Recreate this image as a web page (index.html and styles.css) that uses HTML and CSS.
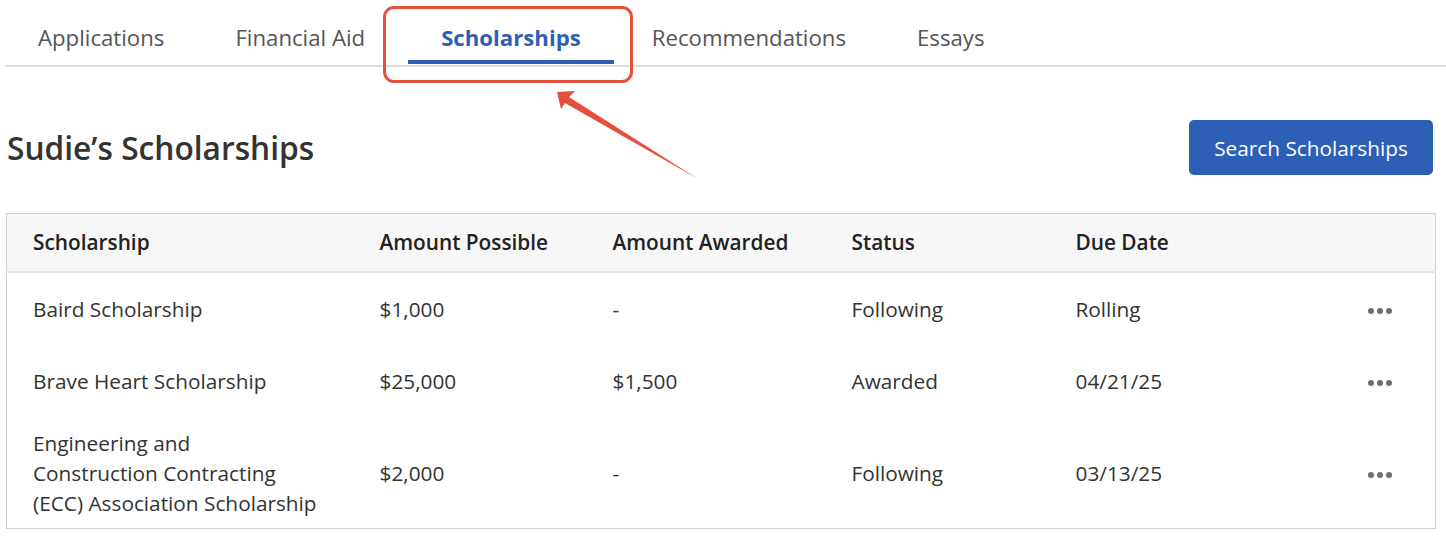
FILE: index.html
```html
<!DOCTYPE html>
<html lang="en">
<head>
<meta charset="utf-8">
<title>Sudie's Scholarships</title>
<link rel="stylesheet" href="styles.css">
</head>
<body>
<div class="page">
  <nav class="tabs">
    <a class="tab">Applications</a>
    <a class="tab">Financial Aid</a>
    <a class="tab active">Scholarships</a>
    <a class="tab">Recommendations</a>
    <a class="tab">Essays</a>
  </nav>
  <div class="head-row">
    <h1 class="title">Sudie’s Scholarships</h1>
    <button class="btn">Search Scholarships</button>
  </div>
  <table class="grid">
    <thead>
      <tr>
        <th class="c1">Scholarship</th>
        <th class="c2">Amount Possible</th>
        <th class="c3">Amount Awarded</th>
        <th class="c4">Status</th>
        <th class="c5">Due Date</th>
        <th class="c6"></th>
      </tr>
    </thead>
    <tbody>
      <tr>
        <td>Baird Scholarship</td>
        <td>$1,000</td>
        <td>-</td>
        <td>Following</td>
        <td>Rolling</td>
        <td class="more"><span class="dots"><i></i><i></i><i></i></span></td>
      </tr>
      <tr>
        <td>Brave Heart Scholarship</td>
        <td>$25,000</td>
        <td>$1,500</td>
        <td>Awarded</td>
        <td>04/21/25</td>
        <td class="more"><span class="dots"><i></i><i></i><i></i></span></td>
      </tr>
      <tr>
        <td>Engineering and<br>Construction Contracting<br>(ECC) Association Scholarship</td>
        <td>$2,000</td>
        <td>-</td>
        <td>Following</td>
        <td>03/13/25</td>
        <td class="more"><span class="dots"><i></i><i></i><i></i></span></td>
      </tr>
    </tbody>
  </table>
</div>
<div class="callout"></div>
<svg class="arrow" width="1446" height="540" viewBox="0 0 1446 540">
  <polygon points="557,92 575,91 569,97 698,179 565,103 561,109" fill="#e5503c"/>
</svg>
</body>
</html>
```
FILE: styles.css
```css
* { box-sizing: border-box; }
html, body { margin: 0; padding: 0; background: #fff; }
body {
  font-family: "Open Sans", "Noto Sans", sans-serif;
  color: #333;
  width: 1446px;
  height: 540px;
  overflow: hidden;
  position: relative;
}
.page { padding: 0 10px 0 6px; }
.tabs {
  display: flex;
  gap: 5px;
  margin-left: -1px;
  margin-right: -10px;
  height: 67px;
  border-bottom: 2px solid #dcdcdc;
  align-items: stretch;
}
.tab {
  display: flex;
  align-items: center;
  padding: 14px 33px 0;
  font-size: 22.2px;
  color: #555;
  border-bottom: 4px solid transparent;
  margin-bottom: 1px;
}
.tab.active {
  color: #2f5fb4;
  font-weight: 700;
  border-bottom-color: #2f5fb4;
  margin-left: 5px;
}
.head-row {
  display: flex;
  justify-content: space-between;
  align-items: center;
  margin-top: 53px;
  padding-right: 3px;
}
.title {
  margin: 0 0 0 1px;
  font-size: 31.7px;
  font-weight: 600;
  color: #333;
}
.btn {
  font-family: inherit;
  font-size: 20.8px;
  color: #fff;
  background: #2d5fb6;
  border: 0;
  border-radius: 5px;
  width: 244px;
  height: 55px;
  padding: 0;
}
.grid {
  margin-top: 38px;
  width: 100%;
  border-collapse: collapse;
  border: 1px solid #cfcfcf;
  font-size: 20.8px;
}
.grid th {
  text-align: left;
  font-weight: 600;
  color: #222;
  background: #f7f7f7;
  height: 58px;
  padding: 0;
  border-bottom: 2px solid #e6e6e6;
}
.grid td {
  height: 73px;
  padding: 10px 0;
  vertical-align: middle;
  line-height: 30px;
  color: #333;
}
.grid th.c1, .grid td:first-child { padding-left: 26px; }
.c1 { width: 373px; }
.c2 { width: 233px; }
.c3 { width: 239px; }
.c4 { width: 224px; }
.c5 { width: 130px; }
.more { text-align: right; padding-right: 43px !important; }
.dots { display: inline-flex; gap: 3px; vertical-align: middle; }
.dots i { width: 6px; height: 6px; border-radius: 50%; background: #6e6e6e; display: block; }
.callout {
  position: absolute;
  left: 383px;
  top: 6px;
  width: 250px;
  height: 77px;
  border: 3px solid #e5503c;
  border-radius: 11px;
}
.arrow { position: absolute; left: 0; top: 0; pointer-events: none; }
```
